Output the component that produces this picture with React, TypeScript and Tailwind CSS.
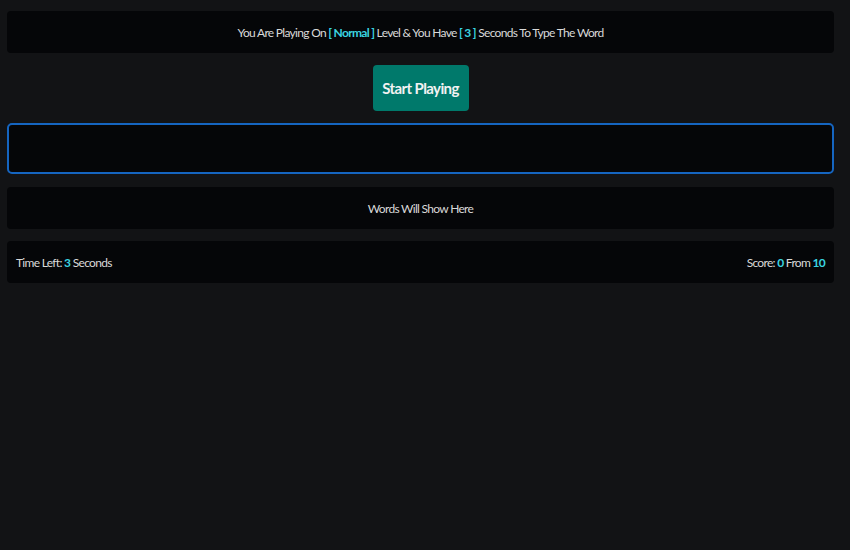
export default function App() {
  return (
    <div
      className="min-h-[550px] w-full bg-[#121315] text-[#d9d9d9] pl-[7px] pr-[16px] pt-[11px]"
      style={{ fontFamily: 'Lato, "Liberation Sans", sans-serif' }}
    >
      <div className="flex flex-col">
        <div className="h-[42px] rounded-[4px] bg-[#050608] flex items-center justify-center pt-[2px] text-[12px] tracking-[-0.7px]">
          <span>
            You Are Playing On <span className="font-bold text-[#3ad4e0]">[ Normal ]</span> Level &amp; You Have{' '}
            <span className="font-bold text-[#3ad4e0]">[ 3 ]</span> Seconds To Type The Word
          </span>
        </div>
        <div className="flex justify-center mt-[12px]">
          <button className="h-[46px] w-[96px] whitespace-nowrap rounded-[4px] bg-[#00796b] text-[#f2f2f2] font-bold text-[15px] tracking-[-0.6px]">
            Start Playing
          </button>
        </div>
        <input className="mt-[12px] h-[51px] w-full rounded-[5px] border-2 border-[#1565c0] bg-[#050608] outline-none px-3" />
        <div className="mt-[13px] h-[42px] rounded-[4px] bg-[#050608] flex items-center justify-center pt-[1px] text-[12px] tracking-[-0.7px]">
          Words Will Show Here
        </div>
        <div className="mt-[12px] h-[42px] rounded-[4px] bg-[#050608] flex items-center justify-between pt-[1px] pl-[9px] pr-[9px] text-[12px] tracking-[-0.7px]">
          <span>
            Time Left: <span className="font-bold text-[#3ad4e0]">3</span> Seconds
          </span>
          <span>
            Score: <span className="font-bold text-[#3ad4e0]">0</span> From{' '}
            <span className="font-bold text-[#3ad4e0]">10</span>
          </span>
        </div>
      </div>
    </div>
  );
}
